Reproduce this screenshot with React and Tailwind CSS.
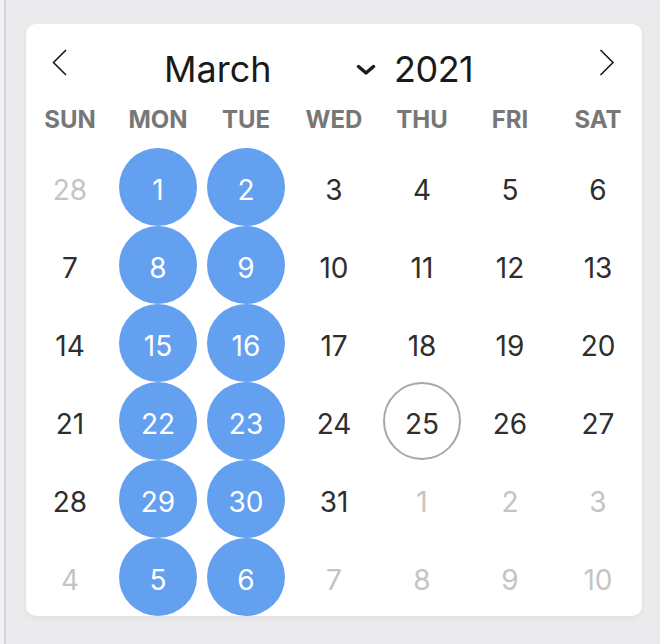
import React, { useState } from 'react';

const WEEKDAYS = ['SUN', 'MON', 'TUE', 'WED', 'THU', 'FRI', 'SAT'];
const MONTHS = [
  'January', 'February', 'March', 'April', 'May', 'June',
  'July', 'August', 'September', 'October', 'November', 'December',
];

// builds a 6x7 grid of days for the given month, padded with the neighbours
const buildDays = (year, month) => {
  const first = new Date(year, month, 1).getDay();
  const start = new Date(year, month, 1 - first);
  return Array.from({ length: 42 }, (_, i) => {
    const d = new Date(start.getFullYear(), start.getMonth(), start.getDate() + i);
    return { date: d, outside: d.getMonth() !== month };
  });
};

const ChevronLeft = () => (
  <svg width="16" height="28" viewBox="0 0 16 28" fill="none">
    <path d="M14 1 L1.5 13.5 L14 26" stroke="#1a1a1a" strokeWidth="1.6" />
  </svg>
);

const ChevronRight = () => (
  <svg width="16" height="28" viewBox="0 0 16 28" fill="none">
    <path d="M1.5 1 L14 13.5 L1.5 26" stroke="#1a1a1a" strokeWidth="1.6" />
  </svg>
);

const ChevronDown = () => (
  <svg width="20" height="11" viewBox="0 0 20 11" fill="none">
    <path d="M2.5 2.5 L10 9 L17.5 2.5" stroke="#1a1a1a" strokeWidth="3.4" strokeLinecap="round" strokeLinejoin="round" />
  </svg>
);

const App = () => {
  const [year] = useState(2021);
  const [month] = useState(2);
  const today = 25;

  const days = buildDays(year, month);
  // Mondays and Tuesdays are the highlighted weekdays
  const isSelected = (d) => d.getDay() === 1 || d.getDay() === 2;

  return (
    <div className="flex min-h-screen bg-[#ebebed]" style={{ fontFamily: 'Inter, "Noto Sans", sans-serif' }}>
      <div className="w-[4px] bg-[#f1f1f3]" />
      <div className="w-[2px] bg-[#d6d6d8]" />
      <div className="pl-[20px] pt-[24px]">
        <div className="w-[616px] h-[592px] bg-white rounded-[10px] overflow-hidden shadow-[0_2px_6px_rgba(0,0,0,0.05)]">
          <div className="flex items-start h-[64px]">
            <button className="ml-[26px] mt-[25px]">
              <ChevronLeft />
            </button>
            <div className="ml-[96px] mt-[23px] w-[212px] flex items-center justify-between">
              <span className="text-[36px] leading-[44px] text-[#1a1a1a]">{MONTHS[month]}</span>
              <ChevronDown />
            </div>
            <span className="ml-[18px] mt-[23px] text-[36px] leading-[44px] tracking-[-0.5px] text-[#1a1a1a]">{year}</span>
            <button className="ml-auto mr-[27px] mt-[25px]">
              <ChevronRight />
            </button>
          </div>

          <div className="grid grid-cols-7 h-[60px] pt-[4px] items-center">
            {WEEKDAYS.map((w) => (
              <div key={w} className="text-center text-[24px] font-bold text-[#777777]">
                {w}
              </div>
            ))}
          </div>

          <div className="grid grid-cols-7 auto-rows-[78px]">
            {days.map(({ date, outside }) => {
              const selected = isSelected(date);
              const isToday = !outside && date.getDate() === today;
              return (
                <div key={date.toISOString()} className="flex items-center justify-center">
                  <div
                    className={`w-[78px] h-[78px] rounded-full flex items-center justify-center pt-[6px] text-[28px] ${
                      selected
                        ? 'bg-[#64a0f0] text-white'
                        : isToday
                        ? 'border-2 border-[#a4a8b0] text-[#2e2e2e]'
                        : outside
                        ? 'text-[#c4c4c4]'
                        : 'text-[#2e2e2e]'
                    }`}
                  >
                    {date.getDate()}
                  </div>
                </div>
              );
            })}
          </div>
        </div>
      </div>
    </div>
  );
};

export default App;
